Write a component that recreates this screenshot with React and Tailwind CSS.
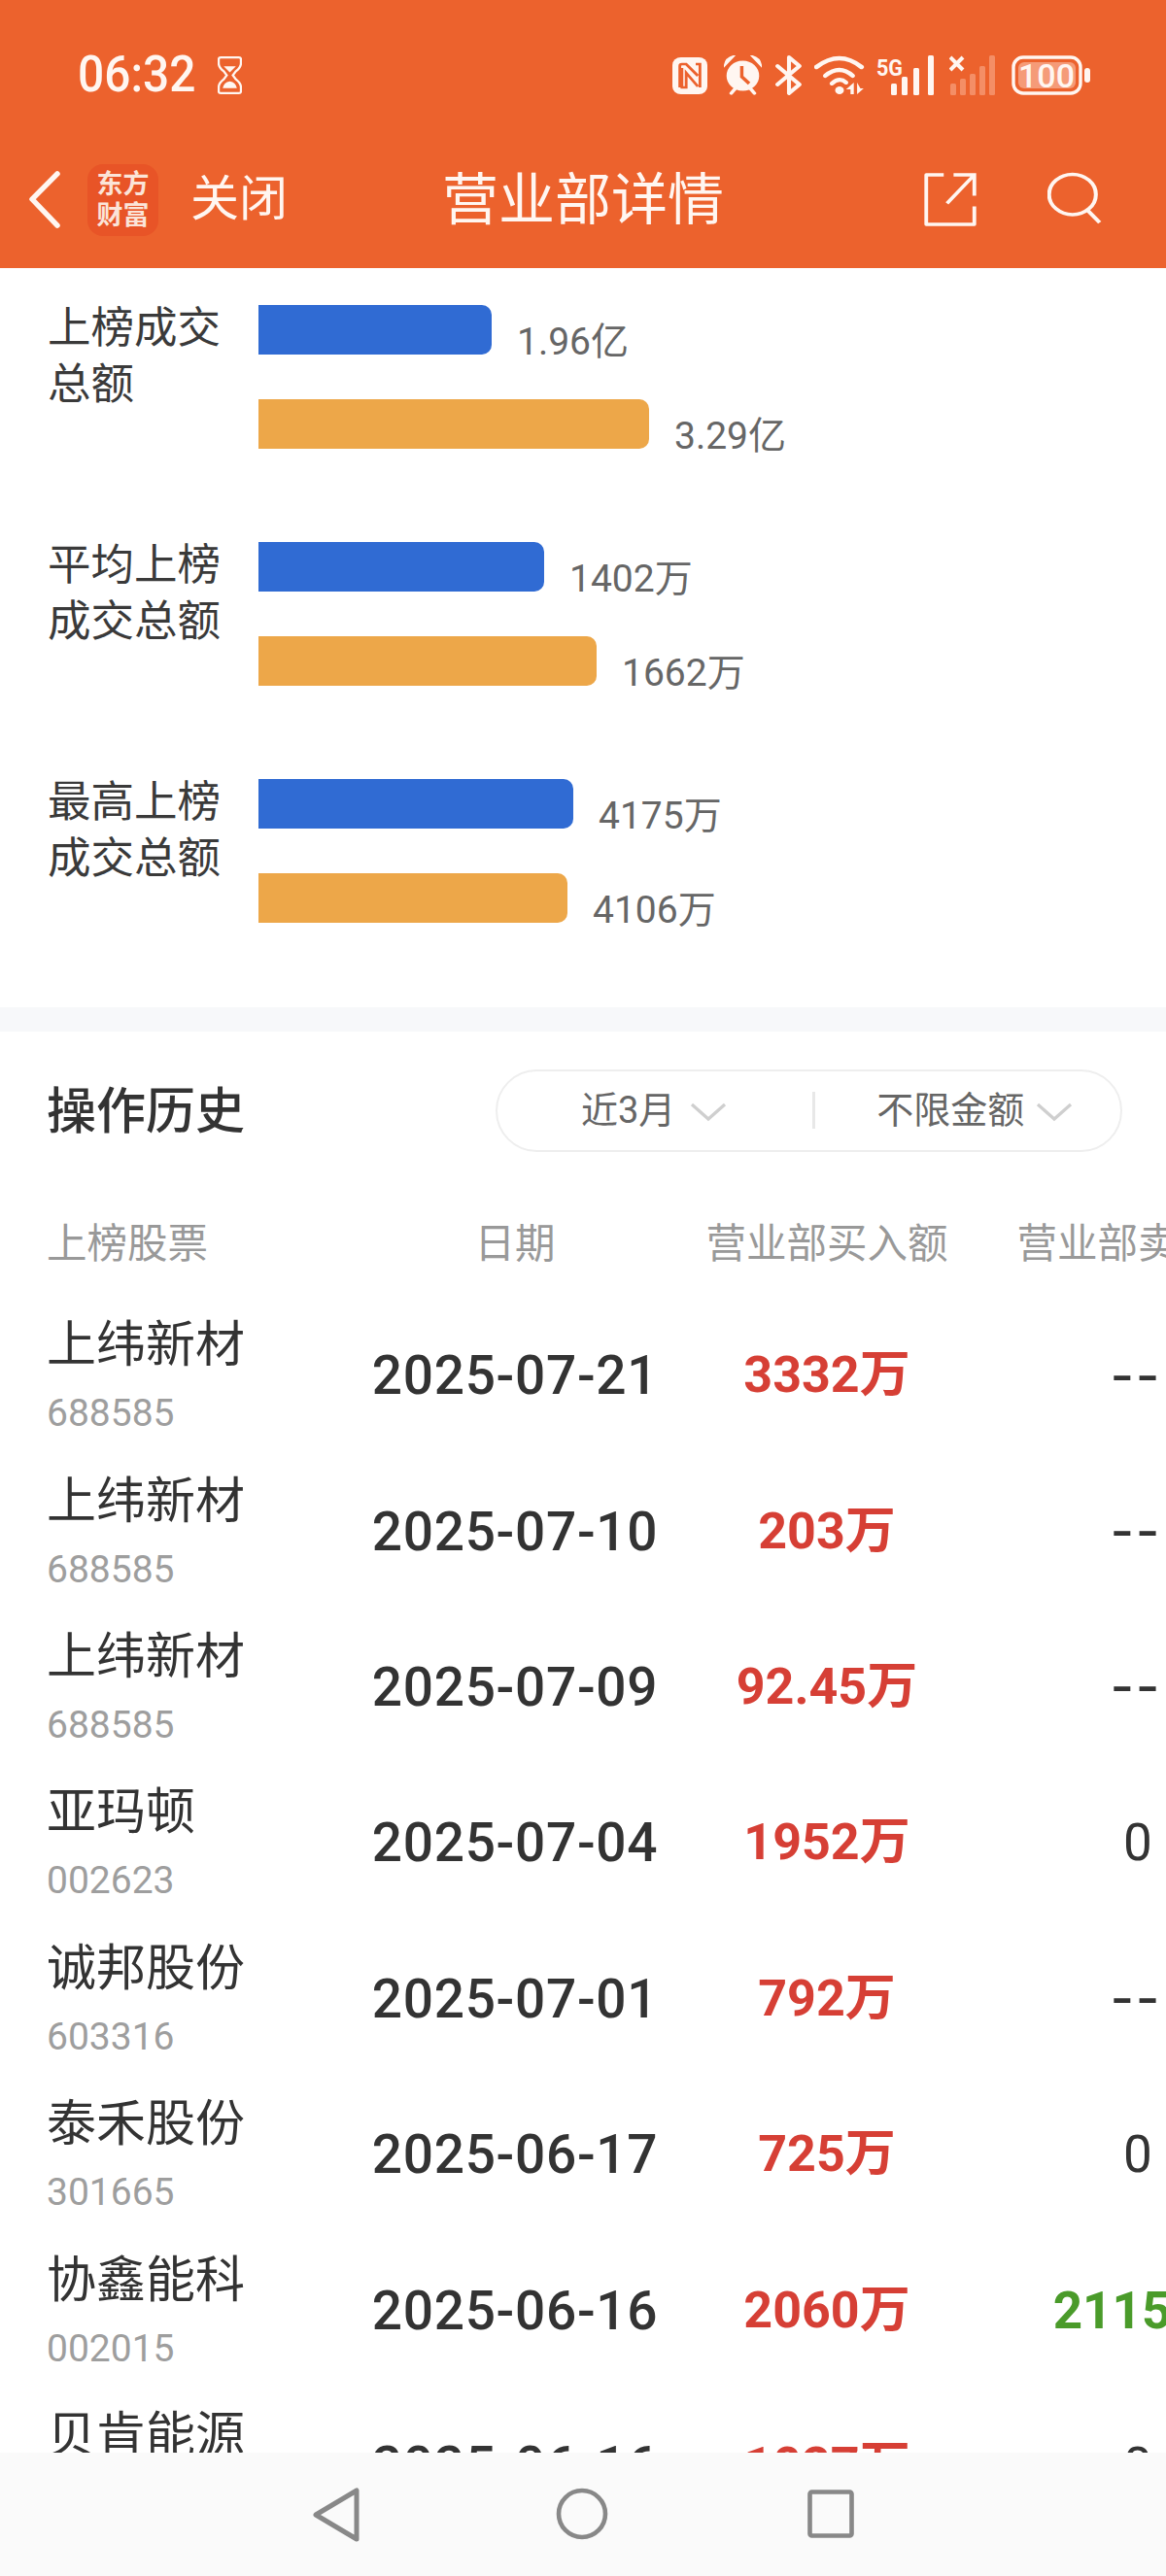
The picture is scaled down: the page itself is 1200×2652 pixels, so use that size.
const W = "#FFF6F1";
const O = "#EC622D";

function Nfc() {
  return (
    <svg width="36" height="38" viewBox="0 0 33 38" preserveAspectRatio="none" className="ml-[692px]">
      <rect x="0" y="0" width="33" height="38" rx="8" fill={W} />
      <path d="M7 31V9q0-2 2-2h4l11 12M9 11v20h4V16l11 14h0M26 31V7h-4" fill="none" stroke={O} strokeWidth="2.6" />
    </svg>
  );
}

function Alarm() {
  return (
    <svg width="39" height="41" viewBox="0 0 36 41" preserveAspectRatio="none" className="ml-[17px]">
      <circle cx="18" cy="21" r="15.5" fill={W} />
      <path d="M1 10Q2 3 9 1L1 10ZM35 10Q34 3 27 1L35 10Z" fill={W} stroke={W} strokeWidth="2" />
      <path d="M7 39l4-5M29 39l-4-5" stroke={W} strokeWidth="3.4" strokeLinecap="round" />
      <path d="M17 11v11l7 7" fill="none" stroke={O} strokeWidth="3.2" />
    </svg>
  );
}

function Bluetooth() {
  return (
    <svg width="28" height="41" viewBox="0 0 26 41" preserveAspectRatio="none" className="ml-[14px]">
      <path d="M2 11l21 19-10 9V2l10 9L2 30" fill="none" stroke={W} strokeWidth="3.8" strokeLinejoin="round" strokeLinecap="round" />
    </svg>
  );
}

function Wifi() {
  return (
    <svg width="52" height="41" viewBox="0 0 46 41" preserveAspectRatio="none" className="ml-[12px]">
      <path d="M2 12Q23 -6 43 12" fill="none" stroke={W} strokeWidth="4.4" strokeLinecap="round" />
      <path d="M10 21Q23 9 35 21" fill="none" stroke={W} strokeWidth="4.2" strokeLinecap="round" />
      <path d="M16 29Q23 22 29 28" fill="none" stroke={W} strokeWidth="4" strokeLinecap="round" />
      <circle cx="23" cy="36" r="4" fill={W} />
      <path d="M36 28v12h-3v-5h-4zM39 28v12l6-6h-3z" fill={W} />
    </svg>
  );
}

function Signal5G() {
  return (
    <svg width="60" height="41" viewBox="0 0 60 41" className="ml-[12px]">
      <text x="0" y="21" fontSize="24" fontWeight="700" fill={W} fontFamily="Roboto" textLength="27" lengthAdjust="spacingAndGlyphs">5G</text>
      <rect x="15" y="29" width="6" height="12" rx="1.5" fill={W} />
      <rect x="26" y="22" width="6" height="19" rx="1.5" fill={W} />
      <rect x="38" y="13" width="6" height="28" rx="1.5" fill={W} />
      <rect x="53" y="0" width="6" height="41" rx="1.5" fill={W} />
    </svg>
  );
}

function SignalX() {
  const f = "#F48E66";
  return (
    <svg width="48" height="41" viewBox="0 0 48 41" className="ml-[15px]">
      <path d="M1 2l13 13M14 2L1 15" stroke={W} strokeWidth="4" />
      <rect x="1" y="29" width="6" height="12" rx="1.5" fill={f} />
      <rect x="11" y="24" width="6" height="17" rx="1.5" fill={f} />
      <rect x="21" y="19" width="6" height="22" rx="1.5" fill={f} />
      <rect x="31" y="11" width="6" height="30" rx="1.5" fill={f} />
      <rect x="41" y="0" width="6" height="41" rx="1.5" fill={f} />
    </svg>
  );
}

function Battery() {
  return (
    <svg width="81" height="41" viewBox="0 0 81 41" className="ml-[16px]">
      <rect x="2" y="2" width="69" height="37" rx="10" fill="none" stroke={W} strokeWidth="3.4" />
      <rect x="7" y="7" width="59" height="27" rx="6" fill="#F59B78" />
      <rect x="75" y="13" width="6" height="15" rx="3" fill={W} />
      <text x="36" y="33" fontSize="34" fontWeight="500" textAnchor="middle" fill={W} fontFamily="Roboto" textLength="58" lengthAdjust="spacingAndGlyphs">100</text>
    </svg>
  );
}

function Header() {
  return (
    <header className="h-[276px] shrink-0 bg-[#EC622D] text-[#FFF6F1]">
      <div className="relative flex h-[150px] items-center pt-[5px]">
        <div className="absolute left-[80px] top-[47px] flex items-center">
          <span className="inline-block w-[121px] origin-left scale-x-[0.92] whitespace-nowrap text-[52px] font-medium leading-[60px]">06:32</span>
          <svg width="25" height="41" viewBox="0 0 24 40" preserveAspectRatio="none" className="ml-[23px]">
            <path d="M3 2h18q2 0 2 2v4q0 4-5 8l-3 4 3 4q5 4 5 8v4q0 2-2 2H3q-2 0-2-2v-4q0-4 5-8l3-4-3-4Q1 12 1 8V4q0-2 2-2z" fill="none" stroke={W} strokeWidth="2.2" />
            <path d="M6 11h12l-6 6zM5 33q1-6 7-7 6 1 7 7z" fill={W} />
          </svg>
        </div>
        <div className="flex items-center">
          <Nfc />
          <Alarm />
          <Bluetooth />
          <Wifi />
          <Signal5G />
          <SignalX />
          <Battery />
        </div>
      </div>
      <div className="flex h-[126px] items-start">
        <svg width="34" height="60" viewBox="0 0 34 62" preserveAspectRatio="none" className="ml-[29px] mt-[26px]">
          <path d="M30 3L4 30l26 28" fill="none" stroke={W} strokeWidth="5.5" strokeLinecap="round" strokeLinejoin="round" />
        </svg>
        <div className="ml-[27px] mt-[19px] flex h-[74px] w-[73px] flex-col items-center justify-center rounded-[16px] bg-[#E85427] text-[27px] font-bold leading-[32px] text-[#FBE4D8]">
          <span>东方</span>
          <span>财富</span>
        </div>
        <span className="ml-[33px] mt-[27px] text-[50px] leading-[56px]">关闭</span>
        <span className="ml-[159px] mt-[24px] text-[58px] leading-[64px]">营业部详情</span>
        <svg width="54" height="55" viewBox="0 0 48 56" preserveAspectRatio="none" className="ml-[206px] mt-[28px]">
          <path d="M18 2H2v52h44V35" fill="none" stroke={W} strokeWidth="3.4" strokeLinejoin="round" />
          <path d="M27 2h19v22M46 2L21 32" fill="none" stroke={W} strokeWidth="3.4" />
        </svg>
        <svg width="56" height="56" viewBox="0 0 50 58" preserveAspectRatio="none" className="ml-[73px] mt-[27px]">
          <circle cx="23" cy="24" r="21.5" fill="none" stroke={W} strokeWidth="3.6" />
          <path d="M37 41l11 13" stroke={W} strokeWidth="3.8" />
        </svg>
      </div>
    </header>
  );
}

const bars = [
  { label: ["上榜成交", "总额"], blue: 240, blueV: "1.96亿", orange: 402, orangeV: "3.29亿" },
  { label: ["平均上榜", "成交总额"], blue: 294, blueV: "1402万", orange: 348, orangeV: "1662万" },
  { label: ["最高上榜", "成交总额"], blue: 324, blueV: "4175万", orange: 318, orangeV: "4106万" },
];

function Bar({ width, color, value }) {
  return (
    <div className="flex h-[51px] items-start">
      <div className={`h-[51px] rounded-r-[10px] ${color}`} style={{ width }} />
      <span className="ml-[26px] mt-[15px] text-[39px] leading-[46px] text-[#666666]">{value}</span>
    </div>
  );
}

function Compare() {
  return (
    <section className="flex h-[761px] flex-col gap-[96px] pt-[38px]">
      {bars.map((b) => (
        <div key={b.blueV} className="flex h-[148px] items-start">
          <div className="-mt-[5px] w-[266px] shrink-0 pl-[49px] text-[44.5px] leading-[58px] text-[#3A3A3A]">
            {b.label.map((l) => (
              <div key={l}>{l}</div>
            ))}
          </div>
          <div className="flex flex-col gap-[45.5px]">
            <Bar width={b.blue} color="bg-[#306BD3]" value={b.blueV} />
            <Bar width={b.orange} color="bg-[#EDA749]" value={b.orangeV} />
          </div>
        </div>
      ))}
    </section>
  );
}

function Chevron() {
  return (
    <svg width="38" height="20" viewBox="0 0 38 20">
      <path d="M2 2l17 15L36 2" fill="none" stroke="#CFCFCF" strokeWidth="3.2" />
    </svg>
  );
}

const rows = [
  ["上纬新材", "688585", "2025-07-21", "3332万", "--", "d"],
  ["上纬新材", "688585", "2025-07-10", "203万", "--", "d"],
  ["上纬新材", "688585", "2025-07-09", "92.45万", "--", "d"],
  ["亚玛顿", "002623", "2025-07-04", "1952万", "0", "d"],
  ["诚邦股份", "603316", "2025-07-01", "792万", "--", "d"],
  ["泰禾股份", "301665", "2025-06-17", "725万", "0", "d"],
  ["协鑫能科", "002015", "2025-06-16", "2060万", "2115万", "g"],
  ["贝肯能源", "002828", "2025-06-16", "1027万", "0", "d"],
];

function Sell({ value, tone }) {
  if (value === "--") {
    return <div className="ml-[20px] w-[300px] pr-[17px] pt-[5px] text-center text-[62px] font-normal leading-[64px] tracking-[-11px] text-[#333333] [font-family:'Liberation_Mono',monospace]">{value}</div>;
  }
  return <div className={`ml-[20px] w-[300px] text-center text-[53px] leading-[64px] ${tone === "g" ? "font-bold text-[#4A9B2A]" : "text-[#333333]"}`}>{value}</div>;
}

function History() {
  return (
    <section className="overflow-hidden">
      <div className="box-content flex h-[124px] items-center justify-between pl-[48px] pr-[45px] pt-[19px]">
        <h2 className="mt-[4px] text-[51px] font-medium leading-[60px] text-[#333333]">操作历史</h2>
        <div className="flex h-[85px] w-[645px] items-center rounded-full border-2 border-[#EEEEEE] pl-[86px]">
          <span className="text-[38px] leading-[46px] text-[#666666]">近3月</span>
          <span className="ml-[15px] mt-[4px] flex"><Chevron /></span>
          <span className="ml-[88px] h-[38px] w-[3px] bg-[#E8E8E8]" />
          <span className="ml-[63px] text-[38px] leading-[46px] text-[#666666]">不限金额</span>
          <span className="ml-[12px] mt-[4px] flex"><Chevron /></span>
        </div>
      </div>
      <div className="mt-[46px] flex h-[60px] w-[1400px] items-center text-[41.5px] leading-[50px] text-[#999999]">
        <div className="w-[380px] pl-[48px]">上榜股票</div>
        <div className="w-[300px] text-center">日期</div>
        <div className="ml-[21px] w-[300px] text-center">营业部买入额</div>
        <div className="ml-[20px] w-[300px] text-center">营业部卖出额</div>
      </div>
      <div className="mt-[25px]">
        {rows.map((r) => (
          <div key={r[2] + r[0]} className="flex h-[160.4px] w-[1400px] items-center">
            <div className="w-[380px] pl-[48px]">
              <div className="text-[51px] leading-[58px] text-[#333333]">{r[0]}</div>
              <div className="mt-[20px] text-[39px] leading-[42px] text-[#9E9E9E]">{r[1]}</div>
            </div>
            <div className="w-[300px] text-center text-[55px] font-medium leading-[64px] tracking-[0.7px] text-[#333333]">{r[2]}</div>
            <div className="ml-[21px] w-[300px] text-center text-[52px] font-bold leading-[64px] text-[#D63F35]">{r[3]}</div>
            <Sell value={r[4]} tone={r[5]} />
          </div>
        ))}
      </div>
    </section>
  );
}

function NavBar() {
  return (
    <nav className="flex h-[127px] shrink-0 items-start bg-[#FAFAFA] pl-[320px] pt-[36px]">
      <svg width="50" height="56" viewBox="0 0 50 56">
        <path d="M47 3v50L5 28z" fill="none" stroke="#888888" strokeWidth="5" strokeLinejoin="round" />
      </svg>
      <svg width="54" height="54" viewBox="0 0 54 54" className="ml-[202px]">
        <circle cx="27" cy="27" r="24" fill="none" stroke="#888888" strokeWidth="4.6" />
      </svg>
      <svg width="48" height="50" viewBox="0 0 48 50" className="ml-[205px] mt-[2px]">
        <rect x="2.5" y="2.5" width="43" height="45" rx="2" fill="none" stroke="#888888" strokeWidth="4.6" />
      </svg>
    </nav>
  );
}

export default function App() {
  return (
    <div className="flex h-[2652px] w-[1200px] flex-col overflow-hidden bg-white [font-family:Roboto,'Noto_Sans_CJK_SC',sans-serif]">
      <Header />
      <main className="min-h-0 flex-1 overflow-hidden">
        <Compare />
        <div className="h-[25px] bg-[#F7F8FA]" />
        <History />
      </main>
      <NavBar />
    </div>
  );
}
